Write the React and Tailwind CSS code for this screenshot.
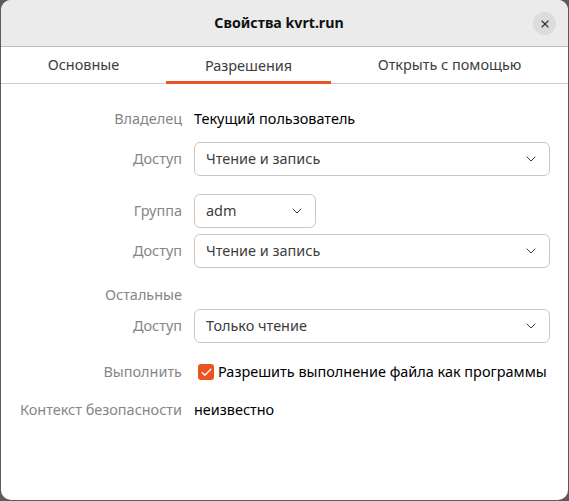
import React from "react";
import { ChevronDown, Check, X } from "lucide-react";

const font = "font-['Noto_Sans','Open_Sans',sans-serif]";

const Row = ({ label, className = "", children }) => (
  <div className={`flex items-center ${className}`}>
    <div className="w-[181px] shrink-0 pr-0 text-right text-[#868686] whitespace-nowrap">{label}</div>
    <div className="ml-[12px] flex-1 min-w-0">{children}</div>
  </div>
);

const Select = ({ value, className = "w-[356px]" }) => (
  <div className={`flex h-[34px] items-center justify-between rounded-[6px] border border-[#cdc7c2] bg-white pl-[11px] pr-[10px] text-[#3d3d3d] ${className}`}>
    <span>{value}</span>
    <ChevronDown className="h-[16px] w-[16px] text-[#3d3d3d]" strokeWidth={1.5} />
  </div>
);

export default function App() {
  return (
    <div className={`h-[501px] w-[569px] bg-[#5c5c5c] ${font} text-[14.45px] leading-[20px]`}>
      <div className="mx-[1px] flex h-[500px] w-[567px] flex-col overflow-hidden rounded-t-[10px] rounded-b-[10px] bg-white">
        {/* Header bar */}
        <div className="relative flex h-[47px] shrink-0 items-center justify-center border-b border-[#bdbdbd] bg-[#ebebeb] pr-[11px]">
          <span className="text-[14.2px] font-bold text-[#111]">Свойства kvrt.run</span>
          <button className="absolute right-[12px] top-[12px] flex h-[23px] w-[23px] items-center justify-center rounded-full bg-[#dcdcdc]">
            <X className="h-[12px] w-[12px] text-[#2e2e2e]" strokeWidth={2.2} />
          </button>
        </div>

        {/* Tabs */}
        <div className="flex h-[37px] shrink-0 border-b border-[#cdcdcd] text-[#3d3d3d]">
          <div className="flex w-[165px] items-center justify-center">Основные</div>
          <div className="flex h-[37px] w-[165px] items-center justify-center border-b-[3px] border-[#e95420] pt-[3px]">Разрешения</div>
          <div className="flex flex-1 items-center justify-center">Открыть с помощью</div>
        </div>

        {/* Permissions */}
        <div className="flex flex-col pt-[25px]">
          <Row label="Владелец" className="h-[20px]">
            <span className="text-black">Текущий пользователь</span>
          </Row>
          <Row label="Доступ" className="mt-[13px]">
            <Select value="Чтение и запись" />
          </Row>
          <Row label="Группа" className="mt-[18px]">
            <Select value="adm" className="w-[122px]" />
          </Row>
          <Row label="Доступ" className="mt-[6px]">
            <Select value="Чтение и запись" />
          </Row>
          <Row label="Остальные" className="mt-[17px] h-[20px]" />
          <Row label="Доступ" className="mt-[4px]">
            <Select value="Только чтение" />
          </Row>
          <Row label="Выполнить" className="mt-[19px] h-[20px]">
            <div className="ml-[4px] flex items-center gap-[4px] text-black">
              <span className="flex h-[16px] w-[16px] items-center justify-center rounded-[3px] bg-[#e95420]">
                <Check className="h-[13px] w-[13px] text-white" strokeWidth={2.5} />
              </span>
              <span className="whitespace-nowrap">Разрешить выполнение файла как программы</span>
            </div>
          </Row>
          <Row label="Контекст безопасности" className="mt-[18px] h-[20px]">
            <span className="text-black">неизвестно</span>
          </Row>
        </div>
      </div>
    </div>
  );
}
